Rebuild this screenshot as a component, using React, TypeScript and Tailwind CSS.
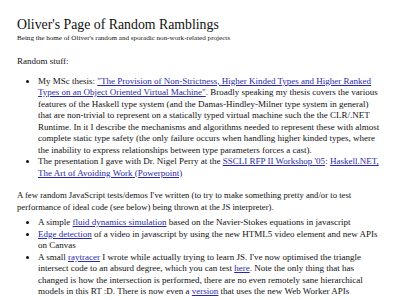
export default function App() {
  const link = "text-[#2a2aa8] underline"
  return (
    <div className="w-[400px] h-[300px] overflow-hidden bg-white text-[#111] font-['Liberation_Serif',serif]">
      <div className="pl-[17px] pr-[19px] pt-[17px]">
        <h1 className="text-[13.8px] leading-[16px]">Oliver's Page of Random Ramblings</h1>
        <p className="text-[7.1px] leading-[8px] mt-[1px]">
          Being the home of Oliver's random and sporadic non-work-related projects
        </p>

        <div className="text-[9px] leading-[11.5px]">
          <p className="mt-[14px]">Random stuff:</p>
          <ul className="list-disc pl-[21px] mt-[8px]">
            <li>
              My MSc thesis:{" "}
              <a className={link}>
                "The Provision of Non-Strictness, Higher Kinded Types and Higher Ranked Types on an
                Object Oriented Virtual Machine"
              </a>
              . Broadly speaking my thesis covers the various features of the Haskell type system
              (and the Damas-Hindley-Milner type system in general) that are non-trivial to represent
              on a statically typed virtual machine such the the CLR/.NET Runtime. In it I describe
              the mechanisms and algorithms needed to represent these with almost complete static
              type safety (the only failure occurs when handling higher kinded types, where the
              inability to express relationships between type parameters forces a cast).
            </li>
            <li>
              The presentation I gave with Dr. Nigel Perry at the{" "}
              <a className={link}>SSCLI RFP II Workshop '05</a>:{" "}
              <a className={link}>Haskell.NET, The Art of Avoiding Work (Powerpoint)</a>
            </li>
          </ul>

          <p className="mt-[11px] text-[8.7px]">
            A few random JavaScript tests/demos I've written (to try to make something pretty
            and/or to test performance of ideal code (see below) being thrown at the JS
            interpreter).
          </p>
          <ul className="list-disc pl-[21px] mt-[4px]">
            <li>
              A simple <a className={link}>fluid dynamics simulation</a> based on the Navier-Stokes
              equations in javascript
            </li>
            <li>
              <a className={link}>Edge detection</a> of a video in javascript by using the new HTML5
              video element and new APIs on Canvas
            </li>
            <li>
              A small <a className={link}>raytracer</a> I wrote while actually trying to learn JS.
              I've now optimised the triangle intersect code to an absurd degree, which you can
              test <a className={link}>here</a>. Note the only thing that has changed is how the
              intersection is performed, there are no even remotely sane hierarchical models in this
              RT :D. There is now even a <a className={link}>version</a> that uses the new Web
              Worker APIs supported by the WebKit and Gecko nightlies{" "}
              <a className={link}>(animated!)</a>
            </li>
          </ul>
        </div>
      </div>
    </div>
  )
}
